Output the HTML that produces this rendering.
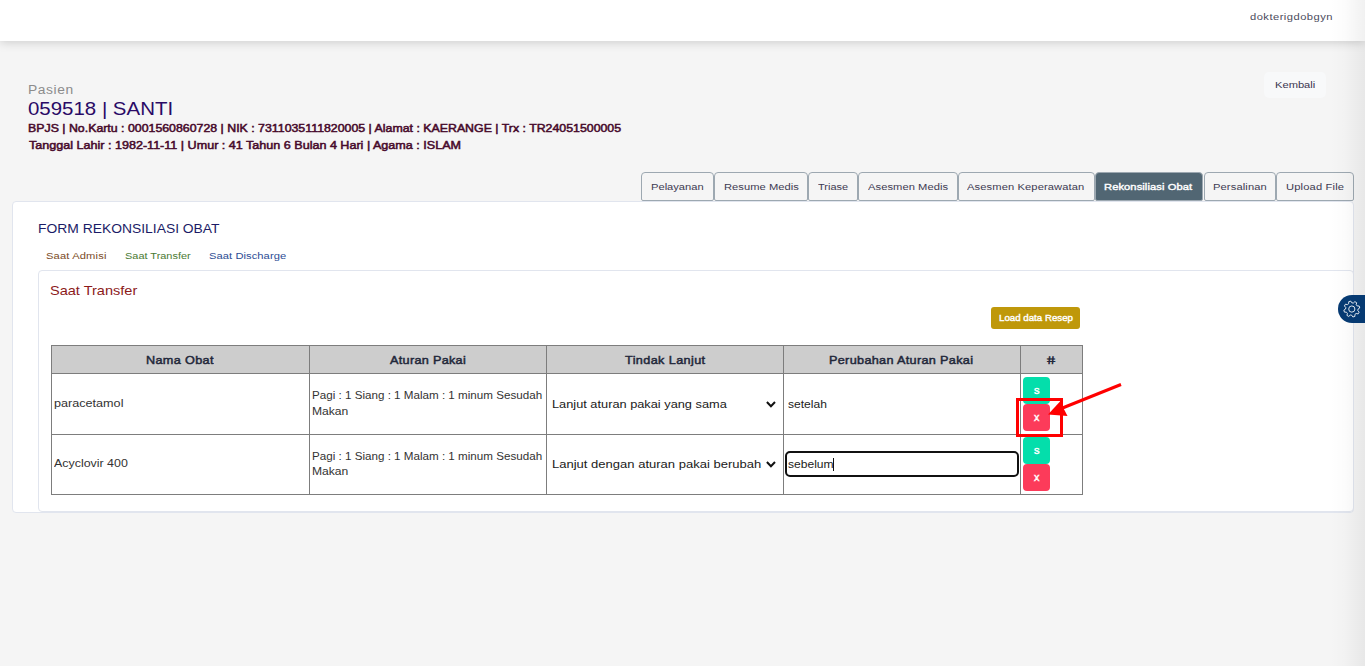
<!DOCTYPE html>
<html lang="id">
<head>
<meta charset="utf-8">
<title>Form Rekonsiliasi Obat</title>
<style>
*{box-sizing:border-box;margin:0;padding:0}
html,body{width:1365px;height:666px;overflow:hidden}
body{background:#f5f5f5;font-family:"Liberation Sans",sans-serif;position:relative;color:#333}
.abs{position:absolute}
.t{position:absolute;white-space:nowrap;line-height:1;transform-origin:0 50%}
#hdr{left:0;top:0;width:1365px;height:41px;background:#fff;box-shadow:0 1px 10px rgba(0,0,0,.18)}
#kbox{left:1264px;top:72px;width:62px;height:26px;background:#f8f9fa;border-radius:5px}
.tab{position:absolute;top:172px;height:29px;border:1px solid #9da8b1;border-radius:4px 4px 2px 2px;background:#f5f5f5}
.tab.on{background:#516673;border-color:#9da8b1}
#card{left:12px;top:201px;width:1342px;height:312px;background:#fff;border:1px solid #e1e5ee;border-radius:4px}
#inner{left:38px;top:270px;width:1316px;height:242px;background:#fff;border:1px solid #e1e5ee;border-radius:4px}
#lbox{left:991px;top:307px;width:89px;height:22px;background:#bf980a;border-radius:3px}
#tbl{left:51px;top:345px;width:1032px;height:150px;background:#fff}
#thbg{left:51px;top:345px;width:1032px;height:29px;background:#cdcdcd}
.hl{position:absolute;left:51px;width:1032px;height:1px;background:#7d7d7d}
.vl{position:absolute;top:345px;width:1px;height:150px;background:#7d7d7d}
.btn{position:absolute;left:1023px;width:27px;height:27px;border-radius:4px}
.g{background:#04deab}
.r{background:#fc3b5a}
#inp{left:785px;top:451px;width:234px;height:26px;border:2px solid #111;border-radius:5px;background:#fff}
#caret{left:833px;top:458px;width:1px;height:13px;background:#111}
#gear{left:1338px;top:295px;width:40px;height:28px;border-radius:14px;background:#063a72}
#fade{left:1330px;top:0;width:35px;height:666px;background:linear-gradient(to right,rgba(0,0,0,0) 0%,rgba(0,0,0,.012) 40%,rgba(0,0,0,.055) 100%)}
svg{position:absolute;overflow:visible}
</style>
</head>
<body>
<header>
<div id="hdr" class="abs"></div>
<span id="user" class="t" style="left:1250.00px;top:11.65px;font-size:9.7px;color:#4b4b5c;letter-spacing:0.419px;transform:scaleX(1.1500);">dokterigdobgyn</span>
</header>
<section class="patient">
<div id="kbox" class="abs"></div>
<span id="pasien" class="t" style="left:27.88px;top:84.00px;font-size:12px;color:#8c8c8c;letter-spacing:0.522px;transform:scaleX(1.1500);">Pasien</span>
<span id="pname" class="t" style="left:27.59px;top:100.10px;font-size:18.6px;color:#2a0a66;transform:scaleX(1.0992);">059518 | SANTI</span>
<span id="l1" class="t" style="left:27.50px;top:122.94px;font-size:11px;color:#470a2b;-webkit-text-stroke:.5px;transform:scaleX(1.1221);">BPJS | No.Kartu : 0001560860728 | NIK : 7311035111820005 | Alamat : KAERANGE | Trx : TR24051500005</span>
<span id="l2" class="t" style="left:28.53px;top:139.94px;font-size:11px;color:#470a2b;-webkit-text-stroke:.5px;transform:scaleX(1.1425);">Tanggal Lahir : 1982-11-11 | Umur : 41 Tahun 6 Bulan 4 Hari | Agama : ISLAM</span>
<span id="kembali" class="t" style="left:1274.53px;top:79.65px;font-size:9.7px;color:#3a3550;transform:scaleX(1.1500);">Kembali</span>
</section>
<main>
<section class="card">
<div id="card" class="abs"></div>
<div id="inner" class="abs"></div>
<div id="lbox" class="abs"></div>
<span id="ftitle" class="t" style="left:37.72px;top:222.20px;font-size:13px;color:#1b1b66;transform:scaleX(1.0665);">FORM REKONSILIASI OBAT</span>
<span id="st1" class="t" style="left:46.42px;top:250.65px;font-size:9.7px;color:#7a4a26;letter-spacing:0.136px;transform:scaleX(1.1500);">Saat Admisi</span>
<span id="st2" class="t" style="left:125.26px;top:250.65px;font-size:9.7px;color:#4a7a32;transform:scaleX(1.1297);">Saat Transfer</span>
<span id="st3" class="t" style="left:208.57px;top:250.65px;font-size:9.7px;color:#2c4c94;letter-spacing:0.065px;transform:scaleX(1.1500);">Saat Discharge</span>
<span id="h2" class="t" style="left:50.48px;top:284.10px;font-size:13px;color:#8c1a1a;transform:scaleX(1.1181);">Saat Transfer</span>
<span id="load" class="t" style="left:999.01px;top:313.51px;font-size:9.3px;color:#ffffff;-webkit-text-stroke:.4px;transform:scaleX(1.0451);">Load data Resep</span>
</section>
<nav class="tabs">
<div class="tab" style="left:641px;width:73px"></div>
<div class="tab" style="left:714px;width:94px"></div>
<div class="tab" style="left:808px;width:50px"></div>
<div class="tab" style="left:858px;width:100px"></div>
<div class="tab" style="left:958px;width:137px"></div>
<div class="tab on" style="left:1095px;width:108px"></div>
<div class="tab" style="left:1204px;width:72px"></div>
<div class="tab" style="left:1276px;width:78px"></div>
<span id="tb1" class="t" style="left:650.78px;top:181.65px;font-size:9.7px;color:#3d3a52;transform:scaleX(1.1500);">Pelayanan</span>
<span id="tb2" class="t" style="left:723.62px;top:181.65px;font-size:9.7px;color:#3d3a52;letter-spacing:0.038px;transform:scaleX(1.1500);">Resume Medis</span>
<span id="tb3" class="t" style="left:817.80px;top:181.65px;font-size:9.7px;color:#3d3a52;transform:scaleX(1.1319);">Triase</span>
<span id="tb4" class="t" style="left:867.91px;top:181.65px;font-size:9.7px;color:#3d3a52;letter-spacing:0.059px;transform:scaleX(1.1500);">Asesmen Medis</span>
<span id="tb5" class="t" style="left:967.42px;top:181.65px;font-size:9.7px;color:#3d3a52;letter-spacing:0.101px;transform:scaleX(1.1500);">Asesmen Keperawatan</span>
<span id="tb6" class="t" style="left:1104.30px;top:181.55px;font-size:9.7px;color:#ffffff;-webkit-text-stroke:.4px;letter-spacing:0.075px;transform:scaleX(1.1500);">Rekonsiliasi Obat</span>
<span id="tb7" class="t" style="left:1213.15px;top:181.65px;font-size:9.7px;color:#3d3a52;letter-spacing:0.107px;transform:scaleX(1.1500);">Persalinan</span>
<span id="tb8" class="t" style="left:1285.64px;top:181.65px;font-size:9.7px;color:#3d3a52;letter-spacing:0.148px;transform:scaleX(1.1500);">Upload File</span>
</nav>
<section class="grid">
<div id="tbl" class="abs"></div>
<div id="thbg" class="abs"></div>
<div class="hl" style="top:345px"></div>
<div class="hl" style="top:373px"></div>
<div class="hl" style="top:434px"></div>
<div class="hl" style="top:494px"></div>
<div class="vl" style="left:51px"></div>
<div class="vl" style="left:309px"></div>
<div class="vl" style="left:546px"></div>
<div class="vl" style="left:783px"></div>
<div class="vl" style="left:1020px"></div>
<div class="vl" style="left:1082px"></div>
<div class="btn g" style="top:377px"></div>
<div class="btn r" style="top:404px"></div>
<div class="btn g" style="top:437px"></div>
<div class="btn r" style="top:464px"></div>
<div id="inp" class="abs"></div>
<div id="caret" class="abs"></div>
<svg style="left:0;top:0" width="1365" height="666" viewBox="0 0 1365 666">
 <path d="M766.9 402 L770.95 406.2 L775 402" fill="none" stroke="#111" stroke-width="2" stroke-linecap="butt" stroke-linejoin="miter"/>
 <path d="M766.9 462 L770.95 466.2 L775 462" fill="none" stroke="#111" stroke-width="2" stroke-linecap="butt" stroke-linejoin="miter"/>
</svg>
<span id="th1" class="t" style="left:145.79px;top:354.52px;font-size:11px;color:#22273a;-webkit-text-stroke:.45px;letter-spacing:0.296px;transform:scaleX(1.1500);">Nama Obat</span>
<span id="th2" class="t" style="left:389.67px;top:354.62px;font-size:11px;color:#22273a;-webkit-text-stroke:.45px;letter-spacing:0.263px;transform:scaleX(1.1500);">Aturan Pakai</span>
<span id="th3" class="t" style="left:624.54px;top:354.70px;font-size:11px;color:#22273a;-webkit-text-stroke:.45px;letter-spacing:0.335px;transform:scaleX(1.1500);">Tindak Lanjut</span>
<span id="th4" class="t" style="left:829.15px;top:354.70px;font-size:11px;color:#22273a;-webkit-text-stroke:.45px;letter-spacing:0.283px;transform:scaleX(1.1500);">Perubahan Aturan Pakai</span>
<span id="th5" class="t" style="left:1047.12px;top:354.56px;font-size:11px;color:#22273a;-webkit-text-stroke:.45px;transform:scaleX(1.3332) skewX(9deg);">#</span>
<span id="c11" class="t" style="left:54.30px;top:397.60px;font-size:11px;color:#333333;transform:scaleX(1.1471);">paracetamol</span>
<span id="c21" class="t" style="left:54.25px;top:457.80px;font-size:11px;color:#333333;transform:scaleX(1.1283);">Acyclovir 400</span>
<span id="c12a" class="t" style="left:312.03px;top:389.90px;font-size:11px;color:#333333;transform:scaleX(1.0571);">Pagi : 1 Siang : 1 Malam : 1 minum Sesudah</span>
<span id="c12b" class="t" style="left:312.08px;top:405.50px;font-size:11px;color:#333333;transform:scaleX(1.1007);">Makan</span>
<span id="c22a" class="t" style="left:312.03px;top:450.70px;font-size:11px;color:#333333;transform:scaleX(1.0571);">Pagi : 1 Siang : 1 Malam : 1 minum Sesudah</span>
<span id="c22b" class="t" style="left:312.08px;top:465.50px;font-size:11px;color:#333333;transform:scaleX(1.1007);">Makan</span>
<span id="c13" class="t" style="left:551.91px;top:399.05px;font-size:11.5px;color:#1a1a1a;transform:scaleX(1.1112);">Lanjut aturan pakai yang sama</span>
<span id="c23" class="t" style="left:551.85px;top:459.05px;font-size:11.5px;color:#1a1a1a;transform:scaleX(1.1322);">Lanjut dengan aturan pakai berubah</span>
<span id="c14" class="t" style="left:787.53px;top:398.70px;font-size:11px;color:#222222;transform:scaleX(1.0949);">setelah</span>
<span id="c24" class="t" style="left:787.94px;top:458.60px;font-size:11px;color:#222222;transform:scaleX(1.0976);">sebelum</span>
<span id="bs1" class="t" style="left:1034.01px;top:385.92px;font-size:10px;color:#ffffff;-webkit-text-stroke:.4px;transform:scaleX(1.1103);">s</span>
<span id="bx1" class="t" style="left:1034.17px;top:412.86px;font-size:10px;color:#ffffff;-webkit-text-stroke:.4px;transform:scaleX(1.0809);">x</span>
<span id="bs2" class="t" style="left:1034.01px;top:445.62px;font-size:10px;color:#ffffff;-webkit-text-stroke:.4px;transform:scaleX(1.1103);">s</span>
<span id="bx2" class="t" style="left:1034.13px;top:472.81px;font-size:10px;color:#ffffff;-webkit-text-stroke:.4px;transform:scaleX(1.0919);">x</span>
</section>
</main>
<div class="annotation">
<svg style="left:0;top:0" width="1365" height="666" viewBox="0 0 1365 666">
 <rect x="1017.5" y="399.5" width="44" height="36" fill="none" stroke="#ff0000" stroke-width="3"/>
 <line x1="1121" y1="384.5" x2="1060" y2="409" stroke="#ff0000" stroke-width="3"/>
 <polygon points="1048,414.5 1060,401.5 1067.5,416" fill="#ff0000"/>
</svg>
</div>
<div id="fade" class="abs"></div>
<aside class="settings">
<div id="gear" class="abs"></div>
<svg style="left:0;top:0" width="1365" height="666" viewBox="0 0 1365 666">
 <path d="M1348.66 303.71 L1348.75 301.66 L1350.75 301.12 L1351.85 302.85 L1353.36 303.05 L1354.87 301.66 L1356.66 302.70 L1356.22 304.70 L1357.14 305.91 L1359.19 306.00 L1359.73 308.00 L1358.00 309.10 L1357.80 310.61 L1359.19 312.12 L1358.15 313.91 L1356.15 313.47 L1354.94 314.39 L1354.85 316.44 L1352.85 316.98 L1351.75 315.25 L1350.24 315.05 L1348.73 316.44 L1346.94 315.40 L1347.38 313.40 L1346.46 312.19 L1344.41 312.10 L1343.87 310.10 L1345.60 309.00 L1345.80 307.49 L1344.41 305.98 L1345.45 304.19 L1347.45 304.63 Z" fill="none" stroke="#fff" stroke-width="1" stroke-linejoin="round" opacity=".85"/>
 <circle cx="1351.8" cy="309.05" r="3.1" fill="none" stroke="#fff" stroke-width="1" opacity=".85"/>
</svg>
</aside>
</body>
</html>
